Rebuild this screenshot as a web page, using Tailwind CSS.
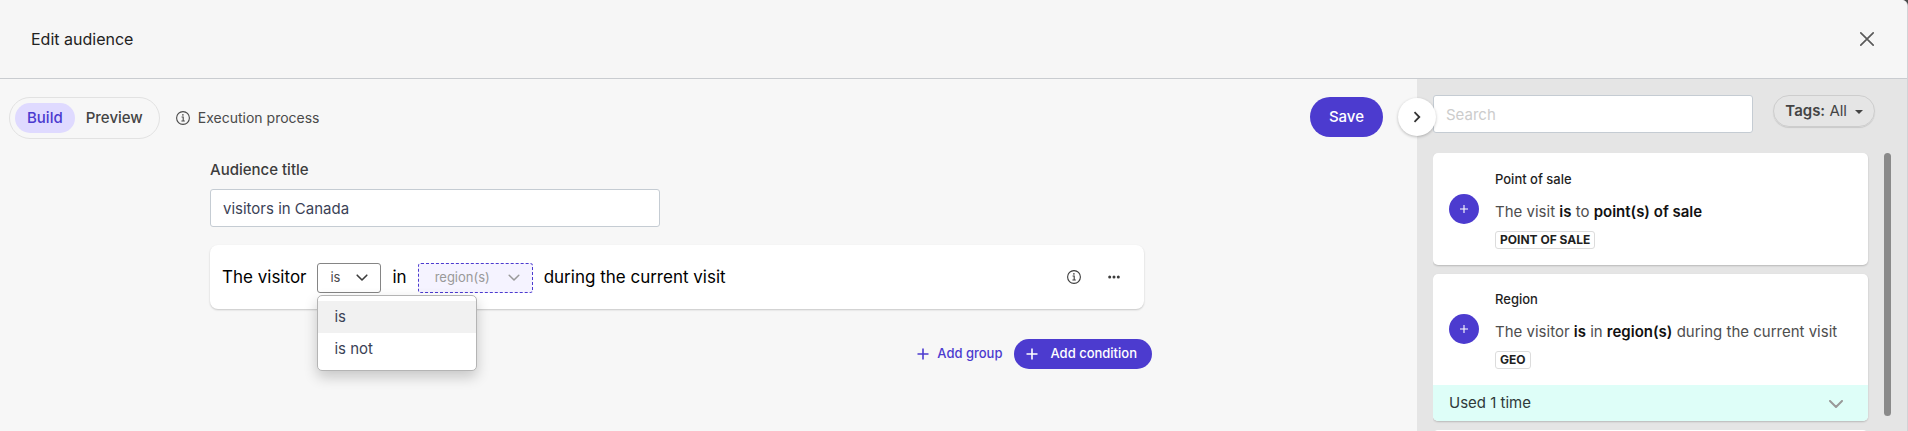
<!DOCTYPE html>
<html lang="en">
  <head>
    <meta charset="UTF-8" />
    <meta name="viewport" content="width=device-width, initial-scale=1.0" />
    <title>Edit audience</title>
    <script src="https://cdn.jsdelivr.net/npm/@tailwindcss/browser@4"></script>
  </head>
  <body class="bg-[#4a4a4a] font-['Inter',sans-serif] text-[#3c3c3c]">
    <div class="flex h-screen flex-col overflow-hidden rounded-tr-md border-r border-[#d2d2d6] bg-[#f7f7f7]">
      <header class="flex h-[79px] shrink-0 items-center justify-between border-b border-[#c9ccd0] bg-[#f6f6f6] pr-8 pb-px pl-[31px]">
        <h1 class="text-base text-[#222]">Edit audience</h1>
        <button type="button" aria-label="Close" class="text-[#5a5a5a]">
          <svg class="size-4" viewBox="0 0 16 16" fill="none" stroke="currentColor" stroke-width="1.7" stroke-linecap="round">
            <path d="M1.8 1.8l12.4 12.4M14.2 1.8L1.8 14.2" />
          </svg>
        </button>
      </header>

      <div class="flex min-h-0 flex-1">
        <main class="min-w-0 flex-1 pt-[18px]">
          <!-- toolbar -->
          <div class="flex items-start justify-between pr-[34px] pl-[9px]">
            <div class="flex items-center gap-4">
              <div class="flex h-[42px] items-center rounded-full border border-[#e2e2e2] px-[5px] text-[15px] font-medium">
                <button type="button" class="h-[30px] rounded-full bg-[#dfdaff] px-3 pt-px text-[#4b39cf]">Build</button>
                <button type="button" class="h-[30px] px-[11px] pt-px text-[#444]">Preview</button>
              </div>
              <button type="button" class="flex items-center gap-2 text-sm text-[#4a4a4a]">
                <svg class="size-[14px]" viewBox="0 0 14 14" fill="none" stroke="currentColor" stroke-width="1.1">
                  <circle cx="7" cy="7" r="6.4" />
                  <path d="M5.6 6h1.6v4M5.4 10h3.4" />
                  <circle cx="6.9" cy="3.9" r=".8" fill="currentColor" stroke="none" />
                </svg>
                Execution process
              </button>
            </div>
            <button type="button" class="h-10 rounded-full bg-[#4c3bcf] px-[19px] pt-px text-[15px] font-medium text-white">Save</button>
          </div>

          <!-- audience form -->
          <div class="pt-[21px] pr-[265px] pl-[210px]">
            <label for="title" class="block text-[15px] leading-5 font-medium">Audience title</label>
            <input
              id="title"
              type="text"
              value="visitors in Canada"
              class="mt-[9px] block h-[38px] w-[450px] rounded-[3px] border border-[#c5ccd3] bg-white px-3 pt-px text-[15px] text-[#3b4256]"
            />

            <div class="mt-[18px] mr-2 flex h-16 items-center rounded-lg bg-white pr-6 pl-3 shadow-[0_1px_2px_rgba(0,0,0,0.2)]">
              <div class="flex flex-1 items-center gap-[11px] pt-0.5 text-[17px] text-black">
                <span>The visitor</span>
                <div class="relative">
                  <select aria-label="Operator" class="block h-[30px] w-16 appearance-none rounded-[3px] border border-[#858585] bg-white pl-3 text-[13px] text-[#4a4a4a]">
                    <option>is</option>
                  </select>
                  <svg class="pointer-events-none absolute top-[11px] right-[13px] h-2 w-3" viewBox="0 0 12 8" fill="none" stroke="#3c3c3c" stroke-width="1.6" stroke-linecap="round" stroke-linejoin="round">
                    <path d="M1.2 1.2L6 6l4.8-4.8" />
                  </svg>
                  <ul role="listbox" class="absolute top-8 left-0 z-10 w-40 rounded-[5px] border border-[#b4b4b4] bg-white py-[5px] text-[15px] leading-8 text-[#3b4256] shadow-[0_6px_14px_rgba(0,0,0,0.2)]">
                    <li role="option" aria-selected="true" class="bg-[#f1f1f1] px-4">is</li>
                    <li role="option" class="px-4">is not</li>
                  </ul>
                </div>
                <span>in</span>
                <div class="relative">
                  <select aria-label="Regions" class="block h-[30px] w-[115px] appearance-none rounded-[3px] border border-dashed border-[#4c3bcf] bg-[#f5f3ff] pl-4 text-[13px] text-[#999]">
                    <option>region(s)</option>
                  </select>
                  <svg class="pointer-events-none absolute top-[11px] right-[13px] h-2 w-3" viewBox="0 0 12 8" fill="none" stroke="#999" stroke-width="1.5" stroke-linecap="round" stroke-linejoin="round">
                    <path d="M1.2 1.2L6 6l4.8-4.8" />
                  </svg>
                </div>
                <span>during the current visit</span>
              </div>
              <div class="flex items-center gap-[27px] text-[#3c3c3c]">
                <button type="button" aria-label="Info">
                  <svg class="size-[14px]" viewBox="0 0 14 14" fill="none" stroke="currentColor" stroke-width="1.1">
                    <circle cx="7" cy="7" r="6.4" />
                    <path d="M5.6 6h1.6v4M5.4 10h3.4" />
                    <circle cx="6.9" cy="3.9" r=".8" fill="currentColor" stroke="none" />
                  </svg>
                </button>
                <button type="button" aria-label="More">
                  <svg class="h-[14px] w-3" viewBox="0 0 12 14" fill="currentColor">
                    <circle cx="1.7" cy="7" r="1.5" />
                    <circle cx="6" cy="7" r="1.5" />
                    <circle cx="10.3" cy="7" r="1.5" />
                  </svg>
                </button>
              </div>
            </div>

            <div class="mt-[30px] flex items-center justify-end gap-3 text-[13px] font-medium">
              <button type="button" class="flex h-[30px] items-center gap-2 text-[#4c3bcf]">
                <svg class="size-3" viewBox="0 0 12 12" stroke="currentColor" stroke-width="1.6"><path d="M6 .5v11M.5 6h11" /></svg>
                Add group
              </button>
              <button type="button" class="flex h-[30px] items-center gap-3 rounded-full bg-[#4c3bcf] pr-[15px] pl-3 text-white">
                <svg class="size-3" viewBox="0 0 12 12" stroke="currentColor" stroke-width="1.6"><path d="M6 .5v11M.5 6h11" /></svg>
                Add condition
              </button>
            </div>
          </div>
        </main>

        <!-- segment library -->
        <aside class="relative flex w-[490px] shrink-0 flex-col bg-[#e5e5e5] pt-4 pl-4">
          <button type="button" aria-label="Collapse panel" class="absolute top-[19px] -left-[19px] z-10 flex size-[38px] items-center justify-center rounded-full bg-white shadow-[0_1px_3px_rgba(0,0,0,0.25)]">
            <svg class="h-3 w-2" viewBox="0 0 8 12" fill="none" stroke="#333" stroke-width="1.8"><path d="M1.5 1.2L6.3 6l-4.8 4.8" /></svg>
          </button>
          <div class="flex items-start gap-5 pr-8">
            <input
              type="text"
              placeholder="Search"
              aria-label="Search"
              class="h-[38px] min-w-0 flex-1 rounded-[3px] border border-[#c5ccd3] bg-white px-3 pt-px text-[15px] placeholder:text-[#ccc]"
            />
            <button type="button" class="flex h-8 items-center rounded-full border border-[#cdcdcd] px-[11px] pt-px text-[15px] text-[#444] shadow-[0_1px_1px_rgba(0,0,0,0.12)]">
              <b class="font-semibold">Tags:</b>&nbsp;All
              <svg class="ml-2 h-1 w-2" viewBox="0 0 8 4" fill="currentColor"><path d="M0 0h8L4 4z" /></svg>
            </button>
          </div>

          <div class="mt-5 flex min-h-0 flex-1 gap-4 overflow-hidden pr-4">
            <div class="flex min-w-0 flex-1 flex-col gap-[9px]">
              <section class="flex h-28 shrink-0 items-center gap-4 rounded-[5px] bg-white px-4 shadow-[0_1px_2px_rgba(0,0,0,0.2)]">
                <button type="button" aria-label="Add point of sale" class="flex size-[30px] shrink-0 items-center justify-center rounded-full bg-[#4c3bcf] text-white">
                  <svg class="size-2" viewBox="0 0 8 8" stroke="currentColor" stroke-width="1.1"><path d="M4 0v8M0 4h8" /></svg>
                </button>
                <div>
                  <h2 class="text-[13px] leading-5 font-medium text-[#1f1f1f]">Point of sale</h2>
                  <p class="mt-[13px] text-[15px] leading-5 text-[#4e4e4e]">
                    The visit <b class="font-semibold text-[#111]">is</b> to
                    <b class="font-semibold text-[#111]">point(s) of sale</b>
                  </p>
                  <span class="mt-[9px] block w-fit rounded-[3px] border border-[#dcdcdc] px-1 text-xs leading-4 font-bold text-[#1f1f1f]">POINT OF SALE</span>
                </div>
              </section>

              <section class="shrink-0 overflow-hidden rounded-[5px] bg-white shadow-[0_1px_2px_rgba(0,0,0,0.2)]">
                <div class="flex h-[111px] items-center gap-4 px-4 pb-px">
                  <button type="button" aria-label="Add region" class="flex size-[30px] shrink-0 items-center justify-center rounded-full bg-[#4c3bcf] text-white">
                    <svg class="size-2" viewBox="0 0 8 8" stroke="currentColor" stroke-width="1.1"><path d="M4 0v8M0 4h8" /></svg>
                  </button>
                  <div>
                    <h2 class="text-[13px] leading-5 font-medium text-[#1f1f1f]">Region</h2>
                    <p class="mt-[13px] text-[15px] leading-5 text-[#4e4e4e]">
                      The visitor <b class="font-semibold text-[#111]">is</b> in
                      <b class="font-semibold text-[#111]">region(s)</b> during the current visit
                    </p>
                    <span class="mt-[9px] block w-fit rounded-[3px] border border-[#dcdcdc] px-1 text-xs leading-4 font-bold text-[#1f1f1f]">GEO</span>
                  </div>
                </div>
                <button type="button" class="flex h-9 w-full items-center justify-between bg-[#defef8] pt-px pr-6 pl-4 text-[15px] text-[#2f3a3a]">
                  Used 1 time
                  <svg class="h-2 w-4" viewBox="0 0 16 8" fill="none" stroke="#999" stroke-width="2" stroke-linecap="round" stroke-linejoin="round"><path d="M2 1l6 6 6-6" /></svg>
                </button>
              </section>

              <section class="h-28 shrink-0 rounded-[5px] bg-white"></section>
            </div>
            <div class="mb-[15px] w-[7px] rounded-full bg-[#8a8a8a]"></div>
          </div>
        </aside>
      </div>
    </div>
  </body>
</html>
